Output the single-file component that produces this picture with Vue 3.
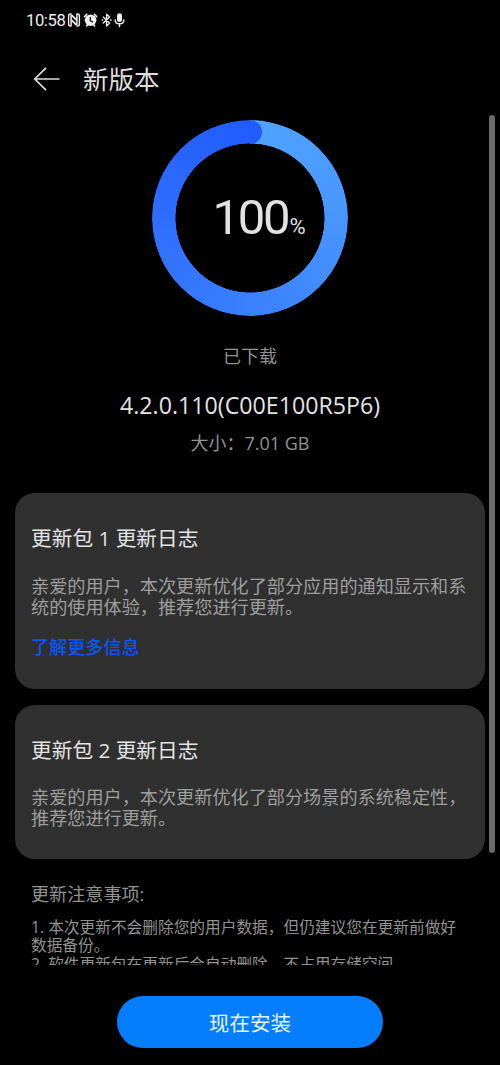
<script setup>
const logs = [
  {
    title: '更新包 1 更新日志',
    lines: ['亲爱的用户，本次更新优化了部分应用的通知显示和系', '统的使用体验，推荐您进行更新。'],
    link: '了解更多信息',
  },
  {
    title: '更新包 2 更新日志',
    lines: ['亲爱的用户，本次更新优化了部分场景的系统稳定性，', '推荐您进行更新。'],
  },
]
const notes = [
  '1. 本次更新不会删除您的用户数据，但仍建议您在更新前做好',
  '数据备份。',
  '2. 软件更新包在更新后会自动删除，不占用存储空间。',
]
</script>

<template>
  <div class="screen">
    <div class="status">
      <span class="time">10:58</span>
      <svg class="icons" width="60" height="16" viewBox="0 0 60 16">
        <g fill="none" stroke="#eee" stroke-linejoin="round">
          <path d="M4.6 2H3.4Q1.6 2 1.6 4v8q0 2 1.8 2h1.2M9.4 2h1.2q1.8 0 1.8 2v8q0 2-1.8 2H9.4" stroke-width="1.4" />
          <path d="M4.1 13.8V3.2M9.9 12.8V2.2" stroke-width="1.5" />
          <path d="M4.3 2.8 9.7 8.2M4.3 7.8l5.4 5.4" stroke-width="1.8" />
        </g>
        <g fill="none" stroke="#eee" stroke-linecap="round" stroke-linejoin="round">
          <path d="M17.6 4.6l2.2-2.3M29.6 4.6l-2.2-2.3M19.6 14l1.4-1.7M27.6 14l-1.4-1.7" stroke-width="1.6" />
          <path d="M36.2 5.1l6.4 6-3 2.9V2.2l3 2.8-6.4 6" stroke-width="1.35" />
          <path d="M35.2 8h.4M43.6 8h.4" stroke-width="1.6" />
          <path d="M48.2 7.9q.1 3.9 4.3 3.9t4.3-3.9M52.5 12v2.4" stroke-width="1.5" />
        </g>
        <circle cx="23.6" cy="8.2" r="5.8" fill="#eee" />
        <path d="M23.3 5v3.6l2.6 1.6" fill="none" stroke="#000" stroke-width="1.2" />
        <rect x="50" y="1.2" width="5" height="8.9" rx="2.5" fill="#eee" />
      </svg>
    </div>

    <header class="header">
      <svg width="28" height="26" viewBox="0 0 28 26" fill="none" stroke="#dedede" stroke-width="1.7">
        <path d="M26.5 13H2M13 1.8 1.8 13 13 24.2" />
      </svg>
      <h1>新版本</h1>
    </header>

    <main class="content">
      <div class="ring">
        <div class="track"></div>
        <div class="cap"></div>
        <div class="value"><span class="number">100</span><span class="percent">%</span></div>
      </div>
      <p class="state">已下载</p>
      <p class="version">4.2.0.110(C00E100R5P6)</p>
      <p class="size">大小：<span>7.01 GB</span></p>

      <section v-for="log in logs" :key="log.title" class="card">
        <h2>{{ log.title }}</h2>
        <p v-for="line in log.lines" :key="line" class="line">{{ line }}</p>
        <a v-if="log.link" class="link">{{ log.link }}</a>
      </section>

      <section class="notes">
        <h3>更新注意事项:</h3>
        <p v-for="note in notes" :key="note">{{ note }}</p>
      </section>
      <div class="scrollbar"></div>
    </main>

    <footer class="footer">
      <button class="install">现在安装</button>
    </footer>
  </div>
</template>

<style>
body {
  background: #000;
}
</style>

<style scoped>
.screen {
  width: 500px;
  height: 1065px;
  display: flex;
  flex-direction: column;
  overflow: hidden;
  background: #000;
  color: #e4e4e4;
  font-family: "Open Sans", "Noto Sans CJK SC", sans-serif;
}
h1, h2, h3, p {
  margin: 0;
  font-weight: 400;
  white-space: nowrap;
}
.status {
  display: flex;
  align-items: center;
  height: 40px;
  padding-left: 26px;
}
.time {
  width: 41px;
  font-family: Roboto, sans-serif;
  font-size: 16.6px;
  letter-spacing: -0.4px;
  line-height: 20px;
  padding-top: 2px;
  color: #eee;
}
.header {
  display: flex;
  align-items: center;
  box-sizing: border-box;
  height: 75px;
  padding: 3px 0 0 33px;
}
.header h1 {
  margin-left: 22px;
  font-size: 25.5px;
  line-height: 36px;
  color: #dedede;
}
.content {
  position: relative;
  height: 850px;
  padding: 5px 15px 0;
  box-sizing: border-box;
  overflow: hidden;
}
.ring {
  position: relative;
  width: 196px;
  height: 196px;
  margin: 0 auto;
  display: flex;
  align-items: center;
  justify-content: center;
}
.track {
  position: absolute;
  inset: 0;
  border-radius: 50%;
  background: conic-gradient(#50a4ff, #4796ff 25%, #3a80ff 50%, #2f6dff 75%, #205cff);
  mask: radial-gradient(circle, transparent 74.2px, #000 74.8px);
}
.cap {
  position: absolute;
  left: 98px;
  top: 0;
  width: 12px;
  height: 23.5px;
  border-radius: 0 12px 12px 0;
  background: #205cff;
}
.value {
  display: flex;
  align-items: baseline;
  padding: 0 0 0 18px;
  color: #e2e2e2;
  font-family: Roboto, sans-serif;
}
.number {
  font-size: 49px;
  line-height: 56px;
  letter-spacing: -2.2px;
}
.percent {
  font-size: 22px;
  margin-left: 1px;
}
.state {
  margin-top: 27px;
  text-align: center;
  font-size: 18px;
  line-height: 26px;
  color: #929292;
}
.version {
  margin-top: 19px;
  text-align: center;
  font-size: 23.2px;
  line-height: 34px;
}
.size {
  margin-top: 8px;
  text-align: center;
  font-size: 18px;
  line-height: 26px;
  color: #929292;
}
.card {
  margin-top: 15.5px;
  padding: 30px 16px 29.5px;
  border-radius: 20px;
  background: #303030;
}
.size + .card {
  margin-top: 37.4px;
}
.card h2 {
  margin-bottom: 22.3px;
  font-size: 20.7px;
  line-height: 30px;
}
.line {
  font-size: 18.15px;
  line-height: 21.5px;
  color: #9e9e9e;
}
.link {
  display: block;
  margin-top: 16px;
  font-size: 18.1px;
  line-height: 25px;
  font-weight: 500;
  color: #0a55fc;
}
.notes {
  padding: 21.3px 16px 0;
  color: #929292;
}
.notes h3 {
  margin-bottom: 11px;
  font-size: 18.1px;
  line-height: 26px;
}
.notes p {
  font-size: 15.7px;
  line-height: 18.4px;
}
.scrollbar {
  position: absolute;
  top: 0;
  right: 5px;
  width: 6px;
  height: 738px;
  border-radius: 3px;
  background: #6a6a6a;
}
.footer {
  display: flex;
  justify-content: center;
  padding-top: 31px;
}
.install {
  width: 266px;
  height: 52px;
  padding: 0;
  border: 0;
  border-radius: 26px;
  background: #047dff;
  color: #eaf4ff;
  font: inherit;
  font-size: 20.6px;
}
</style>
